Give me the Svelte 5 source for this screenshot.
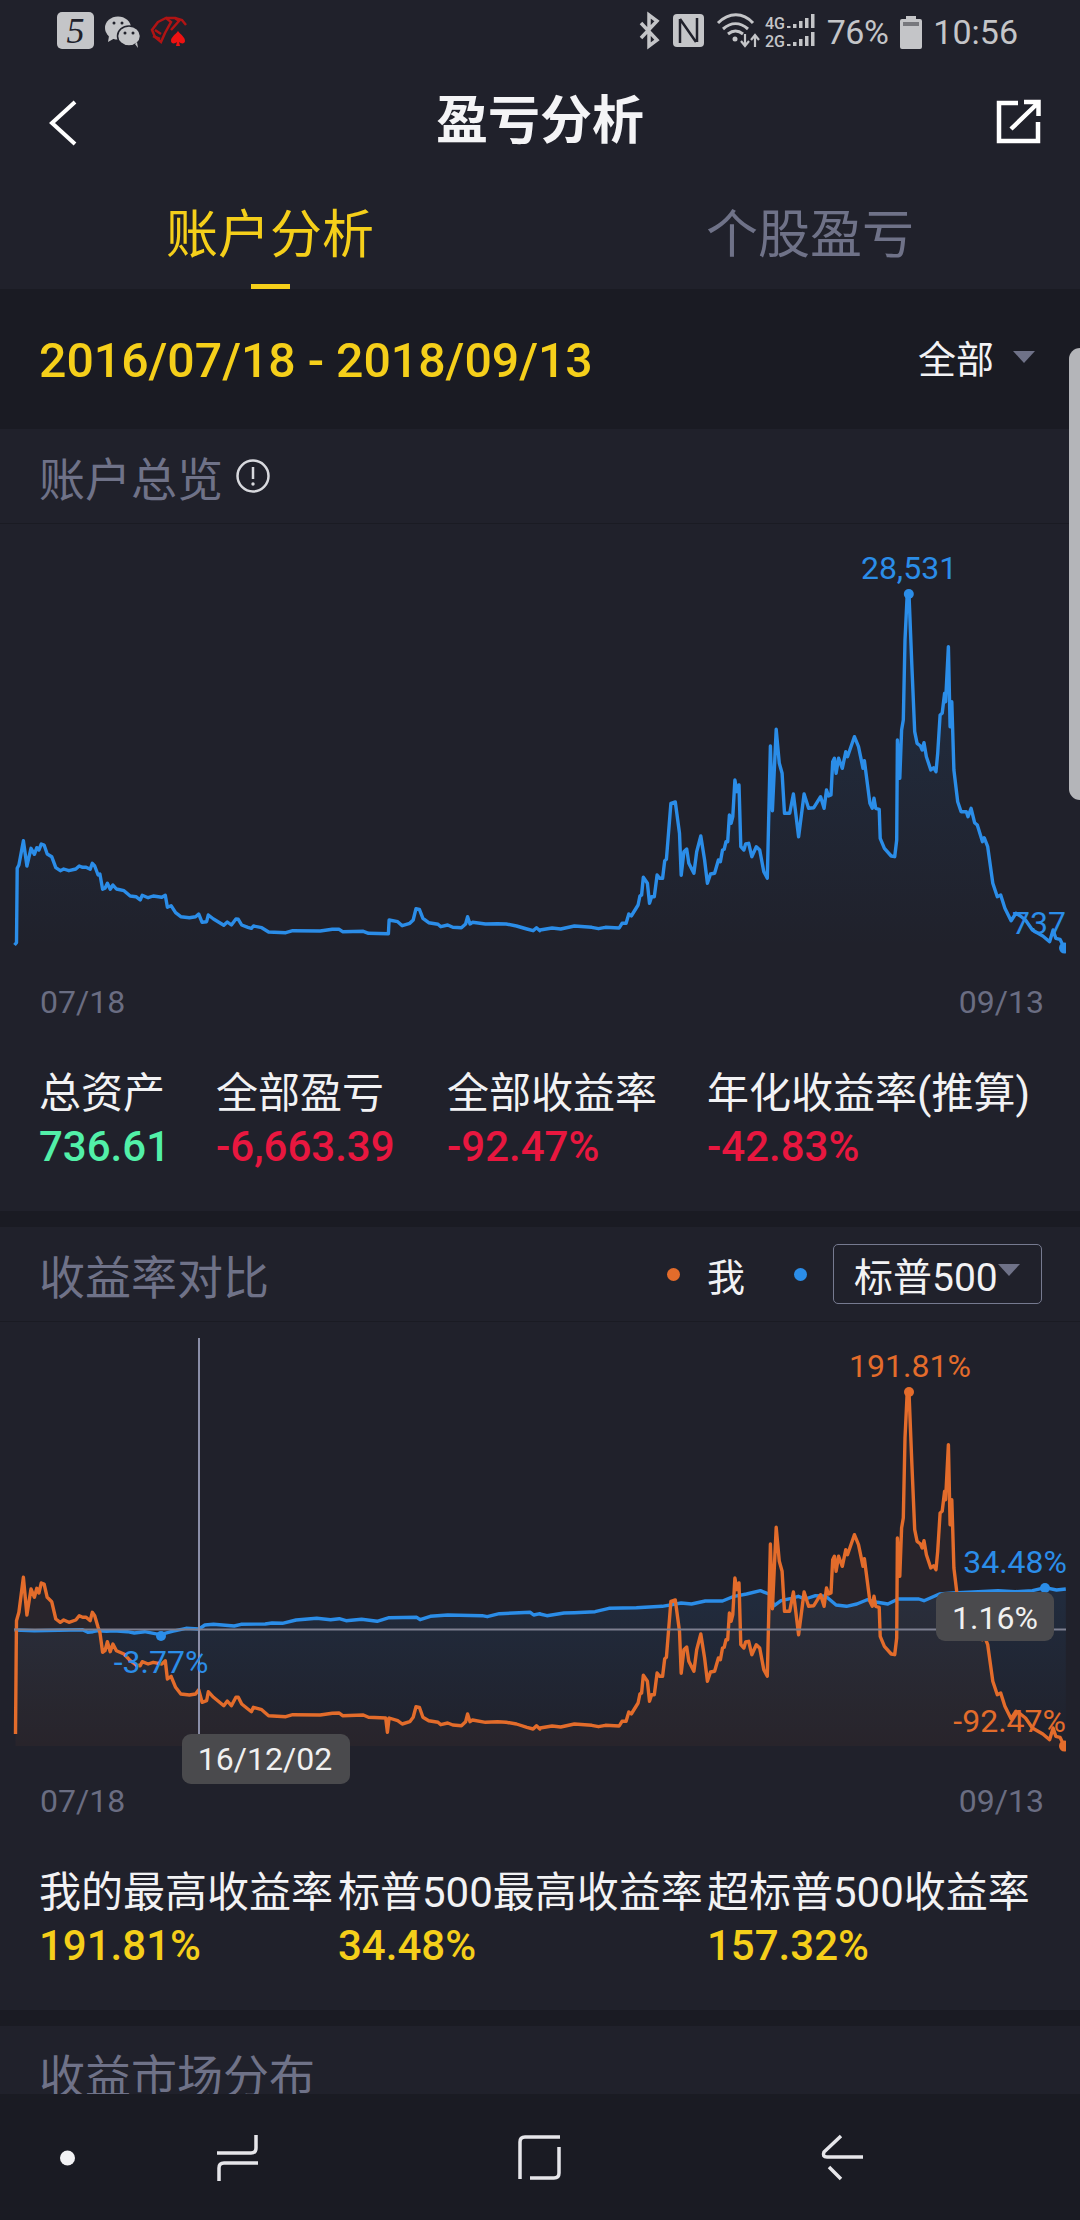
<script>
  // points read off the reference, in zoomed crop units (x / 2.904, y / 3)
  const leftBlue = [[42,1215],[48,1208],[50,985],[55,975],[68,902],[78,978],[90,925],[100,943],[107,923],[113,930],[120,912],[128,915],[137,942],[150,950],[162,983],[175,992],[185,987],[200,992],[220,987],[230,978],[240,982],[250,982],[262,988],[268,970],[275,978],[285,1005],[290,1002],[298,1048],[305,1045],[312,1030],[320,1048],[328,1035],[338,1047],[360,1052],[378,1068],[395,1070],[407,1080],[413,1066],[430,1073],[445,1068],[470,1072],[480,1066],[486,1102],[497,1097],[510,1118],[525,1130],[550,1133],[568,1130],[577,1122],[587,1147],[600,1145],[605,1125],[620,1137],[650,1156],[660,1146],[672,1155],[685,1137],[692,1138],[702,1155],[720,1162],[730,1165],[736,1158],[760,1163],[780,1176],[830,1178],[850,1172],[930,1173],[965,1168],[985,1168],[995,1175],[1055,1174],[1070,1180],[1128,1181],[1130,1140],[1155,1145],[1168,1157],[1190,1150],[1200,1140],[1208,1106],[1218,1108],[1228,1135],[1245,1148],[1272,1153],[1280,1160],[1300,1155],[1315,1162],[1340,1163],[1352,1152],[1358,1130],[1365,1152],[1372,1147],[1410,1152],[1445,1151],[1470,1152],[1500,1158],[1530,1167],[1548,1172],[1558,1163],[1568,1172]];
  const right = [[0,1170],[35,1164],[60,1167],[100,1158],[150,1162],[170,1166],[190,1162],[230,1164],[238,1150],[250,1150],[258,1122],[265,1128],[285,1095],[290,1068],[295,1065],[300,1012],[312,1030],[318,1090],[324,1070],[332,1070],[340,1005],[348,1015],[356,1015],[362,962],[367,958],[380,790],[393,786],[405,880],[410,1006],[418,935],[426,927],[432,970],[447,1000],[455,935],[467,888],[478,960],[486,1030],[495,1002],[507,1000],[518,960],[524,965],[530,930],[535,928],[540,905],[545,905],[550,825],[555,850],[560,830],[566,720],[572,755],[578,735],[583,920],[592,930],[597,912],[606,910],[615,950],[628,920],[638,930],[650,995],[660,1015],[669,618],[675,812],[686,568],[695,670],[703,700],[710,820],[725,820],[736,762],[751,890],[767,762],[780,805],[795,803],[815,770],[825,805],[832,750],[838,768],[845,765],[850,665],[855,655],[860,700],[867,655],[878,685],[888,635],[893,650],[913,590],[925,620],[938,685],[942,662],[958,790],[965,805],[970,775],[975,805],[985,808],[988,895],[1000,925],[1020,948],[1030,950],[1036,900],[1038,600],[1045,715],[1050,570],[1055,540],[1060,300],[1066,170],[1072,170],[1080,380],[1088,575],[1095,610],[1105,618],[1110,630],[1115,608],[1122,650],[1135,690],[1143,683],[1150,695],[1155,640],[1162,525],[1168,520],[1175,460],[1178,485],[1186,320],[1191,560],[1196,485],[1202,690],[1213,785],[1223,815],[1238,815],[1243,830],[1252,805],[1262,848],[1270,855],[1285,905],[1290,893],[1300,920],[1315,1030],[1328,1070],[1338,1065],[1350,1105],[1368,1142],[1382,1120],[1395,1128],[1410,1140],[1430,1170],[1460,1188],[1480,1205],[1490,1170],[1498,1195],[1510,1198],[1523,1225]];
  const leftOrange = [[45,1245],[47,1000],[48,905],[55,880],[68,775],[78,888],[90,810],[100,835],[107,808],[113,822],[120,792],[128,795],[137,835],[150,848],[162,900],[175,910],[185,903],[200,910],[220,903],[230,890],[240,895],[250,895],[262,905],[268,880],[275,890],[285,925],[290,940],[298,1000],[305,995],[312,968],[320,998],[328,975],[338,995],[360,1005],[378,1025],[395,1038],[407,1040],[413,1028],[430,1035],[445,1030],[470,1035],[480,1025],[486,1080],[497,1072],[510,1105],[525,1125],[550,1128],[568,1125],[577,1112],[587,1150],[600,1145],[605,1118],[620,1135],[650,1160],[660,1146],[672,1160],[685,1135],[692,1135],[702,1155],[720,1170],[730,1178],[736,1165],[760,1172],[780,1190],[830,1193],[850,1187],[930,1188],[965,1183],[985,1182],[995,1190],[1055,1188],[1070,1195],[1120,1197],[1125,1240],[1130,1197],[1155,1205],[1168,1215],[1190,1208],[1200,1195],[1208,1163],[1218,1165],[1228,1195],[1245,1205],[1272,1210],[1280,1217],[1300,1212],[1315,1218],[1340,1220],[1352,1208],[1358,1185],[1365,1208],[1372,1203],[1410,1210],[1445,1208],[1470,1210],[1500,1215],[1530,1225],[1548,1230],[1558,1220],[1568,1230]];
  const leftIndex = [[42,933],[100,935],[240,932],[255,940],[270,938],[285,935],[310,937],[330,935],[370,938],[390,942],[420,938],[465,947],[500,937],[540,928],[578,930],[595,918],[620,916],[680,921],[700,916],[770,915],[790,912],[820,913],[860,903],[920,898],[960,902],[985,899],[1005,905],[1050,901],[1095,907],[1130,896],[1210,895],[1220,902],[1250,892],[1300,888],[1400,890],[1415,893],[1450,884],[1540,880],[1550,888],[1568,884]];
  const rightIndex = [[0,885],[20,890],[70,882],[100,881],[160,878],[200,868],[280,866],[355,862],[410,852],[440,855],[480,846],[530,846],[560,833],[600,825],[640,815],[665,825],[680,860],[700,845],[730,838],[750,832],[770,840],[800,830],[830,832],[860,858],[890,862],[920,855],[950,842],[980,850],[1010,855],[1040,840],[1100,840],[1115,845],[1160,825],[1200,822],[1330,815],[1380,818],[1430,815],[1467,806],[1500,813],[1527,810]];

  const SX = 2.904;

  function toPage(points, originX, originY) {
    return points.map(([x, y]) => [originX + x / SX, originY + y / 3]);
  }
  function line(points) {
    return points.map(([x, y]) => `${x.toFixed(1)},${y.toFixed(1)}`).join(' ');
  }
  function area(points, bottom) {
    const first = points[0][0].toFixed(1);
    const last = points[points.length - 1][0].toFixed(1);
    return `${first},${bottom} ${line(points)} ${last},${bottom}`;
  }

  const assets = [...toPage(leftBlue, 0, 540), ...toPage(right, 540, 540)];
  const mine = [...toPage(leftOrange, 0, 1320), ...toPage(right.map(([x, y]) => [x, y + 57]), 540, 1320)];
  const sp500 = [...toPage(leftIndex, 0, 1320), ...toPage(rightIndex, 540, 1320)];

  const overview = [
    { label: '总资产', value: '736.61', tone: 'up' },
    { label: '全部盈亏', value: '-6,663.39', tone: 'down' },
    { label: '全部收益率', value: '-92.47%', tone: 'down' },
    { label: '年化收益率(推算)', value: '-42.83%', tone: 'down' }
  ];
  const compare = [
    { label: '我的最高收益率', value: '191.81%' },
    { label: '标普500最高收益率', value: '34.48%' },
    { label: '超标普500收益率', value: '157.32%' }
  ];
</script>

<div class="phone">
  <div class="page">
    <div class="status">
      <svg class="status-left" viewBox="0 0 200 64" width="200" height="64">
        <rect x="57" y="12" width="37" height="37" rx="5" fill="#c4c5c8" />
        <text x="75.5" y="43" class="five">5</text>
        <ellipse cx="118" cy="28" rx="13" ry="11.5" fill="#c4c5c8" />
        <path d="M109 36l-1 6 7-4z" fill="#c4c5c8" />
        <ellipse cx="129" cy="36" rx="11.5" ry="10" fill="#c4c5c8" stroke="#20212b" stroke-width="1.5" />
        <path d="M135 44l3 4-1-6z" fill="#c4c5c8" />
        <circle cx="114" cy="23" r="1.5" fill="#20212b" />
        <circle cx="122" cy="23" r="1.5" fill="#20212b" />
        <circle cx="125" cy="33" r="1.5" fill="#20212b" />
        <circle cx="133" cy="33" r="1.5" fill="#20212b" />
        <g fill="none" stroke="#b01414" stroke-width="2.5">
          <path d="M158 22l8-4 5 4-6 11-4 9-6-5-3-7z" />
          <path d="M166 18l9 0 4 3-8 9" />
          <path d="M175 18l7 2 4 5" />
          <path d="M155 30l6 4M153 36l7 3" />
        </g>
        <path d="M178 31c3 4 7 6 7 10 0 3-4 3-6 1l1 4h-4l1-4c-2 2-6 2-6-1 0-4 4-6 7-10z" fill="#ee1212" />
      </svg>
      <div class="status-right">
        <svg viewBox="636 0 180 64" width="180" height="64">
          <path d="M641 23l16 17-8 6V15l8 6-16 17" fill="none" stroke="#c4c5c8" stroke-width="3.5" />
          <rect x="673" y="14" width="31" height="33" rx="4" fill="#c4c5c8" />
          <path d="M680 19v24M680 19l16 23M697 18v24" fill="none" stroke="#20212b" stroke-width="2.5" />
          <g fill="none" stroke="#c4c5c8" stroke-width="3">
            <path d="M718 23c11-11 25-11 35 0" />
            <path d="M723 29c8-7 17-7 25 0" />
            <path d="M728 34c5-4 10-4 15 0" />
          </g>
          <circle cx="735" cy="39" r="2.5" fill="#c4c5c8" />
          <path d="M745 34v11M741 41l4 5 4-5M755 47V36M751 40l4-5 4 5" fill="none" stroke="#c4c5c8" stroke-width="2.2" />
          <text x="765" y="29" class="net">4G</text>
          <text x="765" y="47" class="net">2G</text>
          <g fill="#c4c5c8">
            <rect x="787" y="26" width="3.500" height="2" /><rect x="793" y="24" width="3.500" height="4" /><rect x="799" y="21" width="3.500" height="7" /><rect x="805" y="18" width="3.500" height="10" /><rect x="811" y="14" width="3.500" height="14" />
            <rect x="787" y="44" width="3.500" height="2" /><rect x="793" y="42" width="3.500" height="4" /><rect x="799" y="39" width="3.500" height="7" /><rect x="805" y="36" width="3.500" height="10" /><rect x="811" y="32" width="3.500" height="14" />
          </g>
        </svg>
        <span class="battery-text">76%</span>
        <svg class="battery" viewBox="0 0 22 33" width="22" height="33">
          <path d="M6 0h10v3h4a2 2 0 0 1 2 2v26a2 2 0 0 1-2 2H2a2 2 0 0 1-2-2V5a2 2 0 0 1 2-2h4z" fill="#c4c5c8" />
          <rect x="3" y="6" width="16" height="4" fill="#77787d" />
        </svg>
        <span class="clock">10:56</span>
      </div>
    </div>

    <div class="topbar">
      <svg class="topbar-icon" viewBox="0 64 100 116" width="100" height="116">
        <path d="M75 102L52 123l23 21" fill="none" stroke="#fff" stroke-width="4" />
      </svg>
      <div class="title">盈亏分析</div>
      <svg class="topbar-icon" viewBox="980 64 100 116" width="100" height="116">
        <path d="M1018 103h-19v38h39v-19M1011 129l27-26M1024 102h14.500v14" fill="none" stroke="#fff" stroke-width="4.500" />
      </svg>
    </div>

    <div class="tabs">
      <div class="tab active">
        <span>账户分析</span>
        <i class="tab-line"></i>
      </div>
      <div class="tab"><span>个股盈亏</span></div>
    </div>

    <div class="date-row">
      <div class="date-range">2016/07/18 - 2018/09/13</div>
      <div class="range-select">全部<i class="caret"></i></div>
    </div>

    <section>
      <header>
        <h2>账户总览</h2>
        <svg class="info" viewBox="0 0 36 36" width="36" height="36">
          <circle cx="18" cy="18" r="15.500" fill="none" stroke="#d8d9de" stroke-width="2.500" />
          <path d="M18 9v12" stroke="#d8d9de" stroke-width="2.500" />
          <circle cx="18" cy="26" r="1.700" fill="#d8d9de" />
        </svg>
      </header>

      <svg class="chart" viewBox="0 524 1080 462" width="1080" height="462">
        <defs>
          <linearGradient id="assetFill" x1="0" y1="0" x2="0" y2="1">
            <stop offset="0" stop-color="#2b8de8" stop-opacity="0.13" />
            <stop offset="1" stop-color="#2b8de8" stop-opacity="0" />
          </linearGradient>
          <clipPath id="assetClip"><rect x="0" y="524" width="1066" height="462" /></clipPath>
        </defs>
        <g clip-path="url(#assetClip)">
          <polygon points={area(assets, 948)} fill="url(#assetFill)" />
          <polyline points={line(assets)} class="plot blue" />
          <circle cx="1064.500" cy="948" r="5.500" class="dot-blue" />
        </g>
        <circle cx="908.800" cy="594" r="5" class="dot-blue" />
        <text x="909" y="579" class="mark blue-text" text-anchor="middle">28,531</text>
        <text x="1066" y="934" class="mark blue-text" text-anchor="end">737</text>
      </svg>

      <div class="axis"><span>07/18</span><span>09/13</span></div>

      <div class="stats stats-four">
        {#each overview as item}
          <div>
            <div class="stat-label">{item.label}</div>
            <div class="stat-value {item.tone}">{item.value}</div>
          </div>
        {/each}
      </div>
    </section>

    <section>
      <header>
        <h2>收益率对比</h2>
        <div class="legend">
          <i class="legend-dot orange"></i>
          <span class="legend-me">我</span>
          <i class="legend-dot azure"></i>
          <div class="index-select">标普500<i class="caret"></i></div>
        </div>
      </header>

      <svg class="chart" viewBox="0 1323 1080 463" width="1080" height="463">
        <defs>
          <linearGradient id="indexFill" x1="0" y1="0" x2="0" y2="1">
            <stop offset="0" stop-color="#2b8de8" stop-opacity="0.1" />
            <stop offset="1" stop-color="#2b8de8" stop-opacity="0" />
          </linearGradient>
          <clipPath id="rateClip"><rect x="0" y="1323" width="1066" height="463" /></clipPath>
        </defs>
        <g clip-path="url(#rateClip)">
          <polygon points={area(sp500, 1747)} fill="url(#indexFill)" />
          <polygon points={area(mine, 1747)} fill="#e36c2b" fill-opacity="0.045" />
          <polyline points={line(sp500)} class="plot blue" />
          <polyline points={line(mine)} class="plot orange-line" />
          <circle cx="1064.500" cy="1747" r="5.500" class="dot-orange" />
        </g>
        <line x1="14" y1="1630.500" x2="1066" y2="1630.500" class="cross-h" />
        <line x1="199" y1="1339" x2="199" y2="1735" class="cross-v" />

        <circle cx="161" cy="1637" r="5" class="dot-blue" />
        <circle cx="1045" cy="1589" r="5" class="dot-blue" />
        <circle cx="909" cy="1393" r="5" class="dot-orange" />
        <text x="910" y="1378" class="mark orange-text" text-anchor="middle">191.81%</text>
        <text x="1067" y="1574" class="mark blue-text" text-anchor="end">34.48%</text>
        <text x="161" y="1674" class="mark blue-text" text-anchor="middle">-3.77%</text>
        <text x="1066" y="1733" class="mark orange-text" text-anchor="end">-92.47%</text>

        <rect x="936" y="1593" width="118" height="49" rx="9" class="tip" />
        <text x="995" y="1630" class="tip-text" text-anchor="middle">1.16%</text>
        <rect x="182" y="1735" width="168" height="50" rx="9" class="tip" />
        <text x="265" y="1771" class="tip-text" text-anchor="middle">16/12/02</text>
      </svg>

      <div class="axis"><span>07/18</span><span>09/13</span></div>

      <div class="stats stats-three">
        {#each compare as item}
          <div>
            <div class="stat-label">{item.label}</div>
            <div class="stat-value gold">{item.value}</div>
          </div>
        {/each}
      </div>
    </section>

    <section>
      <header>
        <h2>收益市场分布</h2>
      </header>
    </section>
  </div>

  <nav>
    <svg viewBox="0 2094 1080 126" width="1080" height="126">
      <circle cx="67.500" cy="2158" r="7.500" fill="#f2f2f4" />
      <g fill="none" stroke="#e6e6ea" stroke-width="3.500">
        <path d="M256 2135v13q0 5-5 5h-34M258 2163h-34q-5 0-5 5v13" />
        <path d="M560 2137h-35q-5 0-5 5v37M559 2147v26q0 5-5 5h-24" />
        <path d="M841 2136l-17 16q-2 5 3 5h36M829 2167l12 12" />
      </g>
    </svg>
  </nav>

  <div class="scrollbar"></div>
</div>

<style>
  :global(body) {
    margin: 0;
    background: #1a1b23;
  }

  .phone {
    position: relative;
    width: 1080px;
    height: 2220px;
    display: flex;
    flex-direction: column;
    overflow: hidden;
    background: #1a1b23;
    font-family: Roboto, "Noto Sans CJK SC", sans-serif;
    color: #f2f2f4;
  }

  .page {
    flex: 1;
    min-height: 0;
    overflow: hidden;
  }

  nav {
    height: 126px;
    flex: none;
    background: #1a1b23;
  }

  nav svg,
  .chart {
    display: block;
  }

  .status {
    height: 64px;
    display: flex;
    justify-content: space-between;
    background: #20212b;
    color: #c4c5c8;
  }

  .five {
    font-family: "Liberation Serif", serif;
    font-style: italic;
    font-size: 36px;
    fill: #20212b;
    text-anchor: middle;
  }

  .net {
    font-family: Roboto, sans-serif;
    font-size: 16px;
    font-weight: 500;
    fill: #c4c5c8;
  }

  .status-right {
    display: flex;
    align-items: center;
    padding-right: 62px;
  }

  .battery-text {
    margin-left: 11px;
    font-size: 34px;
    letter-spacing: -0.5px;
  }

  .battery {
    margin-left: 12px;
  }

  .clock {
    margin-left: 11px;
    font-size: 34px;
  }

  .topbar {
    height: 116px;
    display: flex;
    justify-content: space-between;
    align-items: center;
    background: #20212b;
  }

  .title {
    font-size: 52px;
    font-weight: 700;
    line-height: 60px;
    margin-top: -1px;
    color: #f4f4f6;
  }

  .tabs {
    height: 109px;
    display: grid;
    grid-template-columns: 540px 540px;
    background: #20212b;
  }

  .tab {
    display: flex;
    flex-direction: column;
    align-items: center;
    padding-top: 26px;
    color: #6f7288;
    font-size: 52px;
    line-height: 60px;
  }

  .tab.active {
    color: #f5cf1a;
  }

  .tab-line {
    width: 39px;
    height: 5px;
    margin-top: 18px;
    background: #f5cf1a;
  }

  .date-row {
    height: 140px;
    display: flex;
    justify-content: space-between;
    align-items: center;
    padding: 0 45px 0 39px;
  }

  .date-range {
    margin-top: 3px;
    font-size: 48.2px;
    font-weight: 500;
    color: #f5cf1a;
  }

  .range-select {
    display: flex;
    align-items: center;
    padding-bottom: 6px;
    font-size: 38px;
    color: #f2f2f4;
  }

  .range-select .caret {
    margin-left: 19px;
    margin-top: 2px;
  }

  .caret {
    width: 0;
    height: 0;
    border-left: 11px solid transparent;
    border-right: 11px solid transparent;
    border-top: 12px solid #6f7288;
  }

  section {
    margin-bottom: 16px;
    background: #20212b;
  }

  header {
    height: 94px;
    display: flex;
    align-items: center;
    padding: 0 38px 0 39px;
    border-bottom: 1px solid #1a1b23;
  }

  h2 {
    margin: 0;
    font-size: 46px;
    font-weight: 400;
    color: #6f7288;
  }

  .info {
    margin-left: 12px;
  }

  .legend {
    margin-left: auto;
    display: flex;
    align-items: center;
  }

  .legend-dot {
    width: 13px;
    height: 13px;
    border-radius: 50%;
  }

  .legend-dot.orange {
    background: #e36c2b;
  }

  .legend-dot.azure {
    margin-left: 49px;
    background: #2b8de8;
  }

  .legend-me {
    margin-left: 27px;
    font-size: 38px;
  }

  .index-select {
    margin-left: 26px;
    width: 209px;
    height: 60px;
    box-sizing: border-box;
    display: flex;
    align-items: center;
    padding-left: 20px;
    border: 1px solid #767a90;
    border-radius: 5px;
    font-size: 39px;
  }

  .index-select .caret {
    margin-top: -8px;
  }

  .plot {
    fill: none;
    stroke-width: 3.4;
    stroke-linejoin: round;
  }

  .blue {
    stroke: #2b8de8;
  }

  .orange-line {
    stroke: #e36c2b;
  }

  .dot-blue {
    fill: #2b8de8;
  }

  .dot-orange {
    fill: #e36c2b;
  }

  .mark {
    font-size: 32px;
  }

  .blue-text {
    fill: #2b8de8;
  }

  .orange-text {
    fill: #e36c2b;
  }

  .cross-h {
    stroke: #7d7f90;
    stroke-width: 2;
  }

  .cross-v {
    stroke: #8a8ea8;
    stroke-width: 2;
  }

  .tip {
    fill: #4a4a4d;
  }

  .tip-text {
    font-size: 32px;
    fill: #f0f0f0;
  }

  .axis {
    height: 32px;
    display: flex;
    justify-content: space-between;
    align-items: center;
    padding: 0 36px 0 40px;
    font-size: 32px;
    color: #6a6d82;
  }

  .stats {
    display: grid;
    padding: 49px 0 38px 39px;
  }

  .stats-four {
    grid-template-columns: 177px 231px 260px auto;
  }

  .stats-three {
    grid-template-columns: 299px 369px auto;
  }

  .stat-label {
    font-size: 42px;
    line-height: 54px;
    white-space: nowrap;
    color: #f2f2f4;
  }

  .stat-value {
    font-size: 42px;
    font-weight: 500;
    line-height: 52px;
  }

  .up {
    color: #52f0a8;
  }

  .down {
    color: #e8173f;
  }

  .gold {
    color: #f5cf1a;
  }

  .scrollbar {
    position: absolute;
    top: 348px;
    right: 0;
    width: 11px;
    height: 452px;
    border-radius: 14px 0 0 14px;
    background: #b4b5b9;
  }
</style>
